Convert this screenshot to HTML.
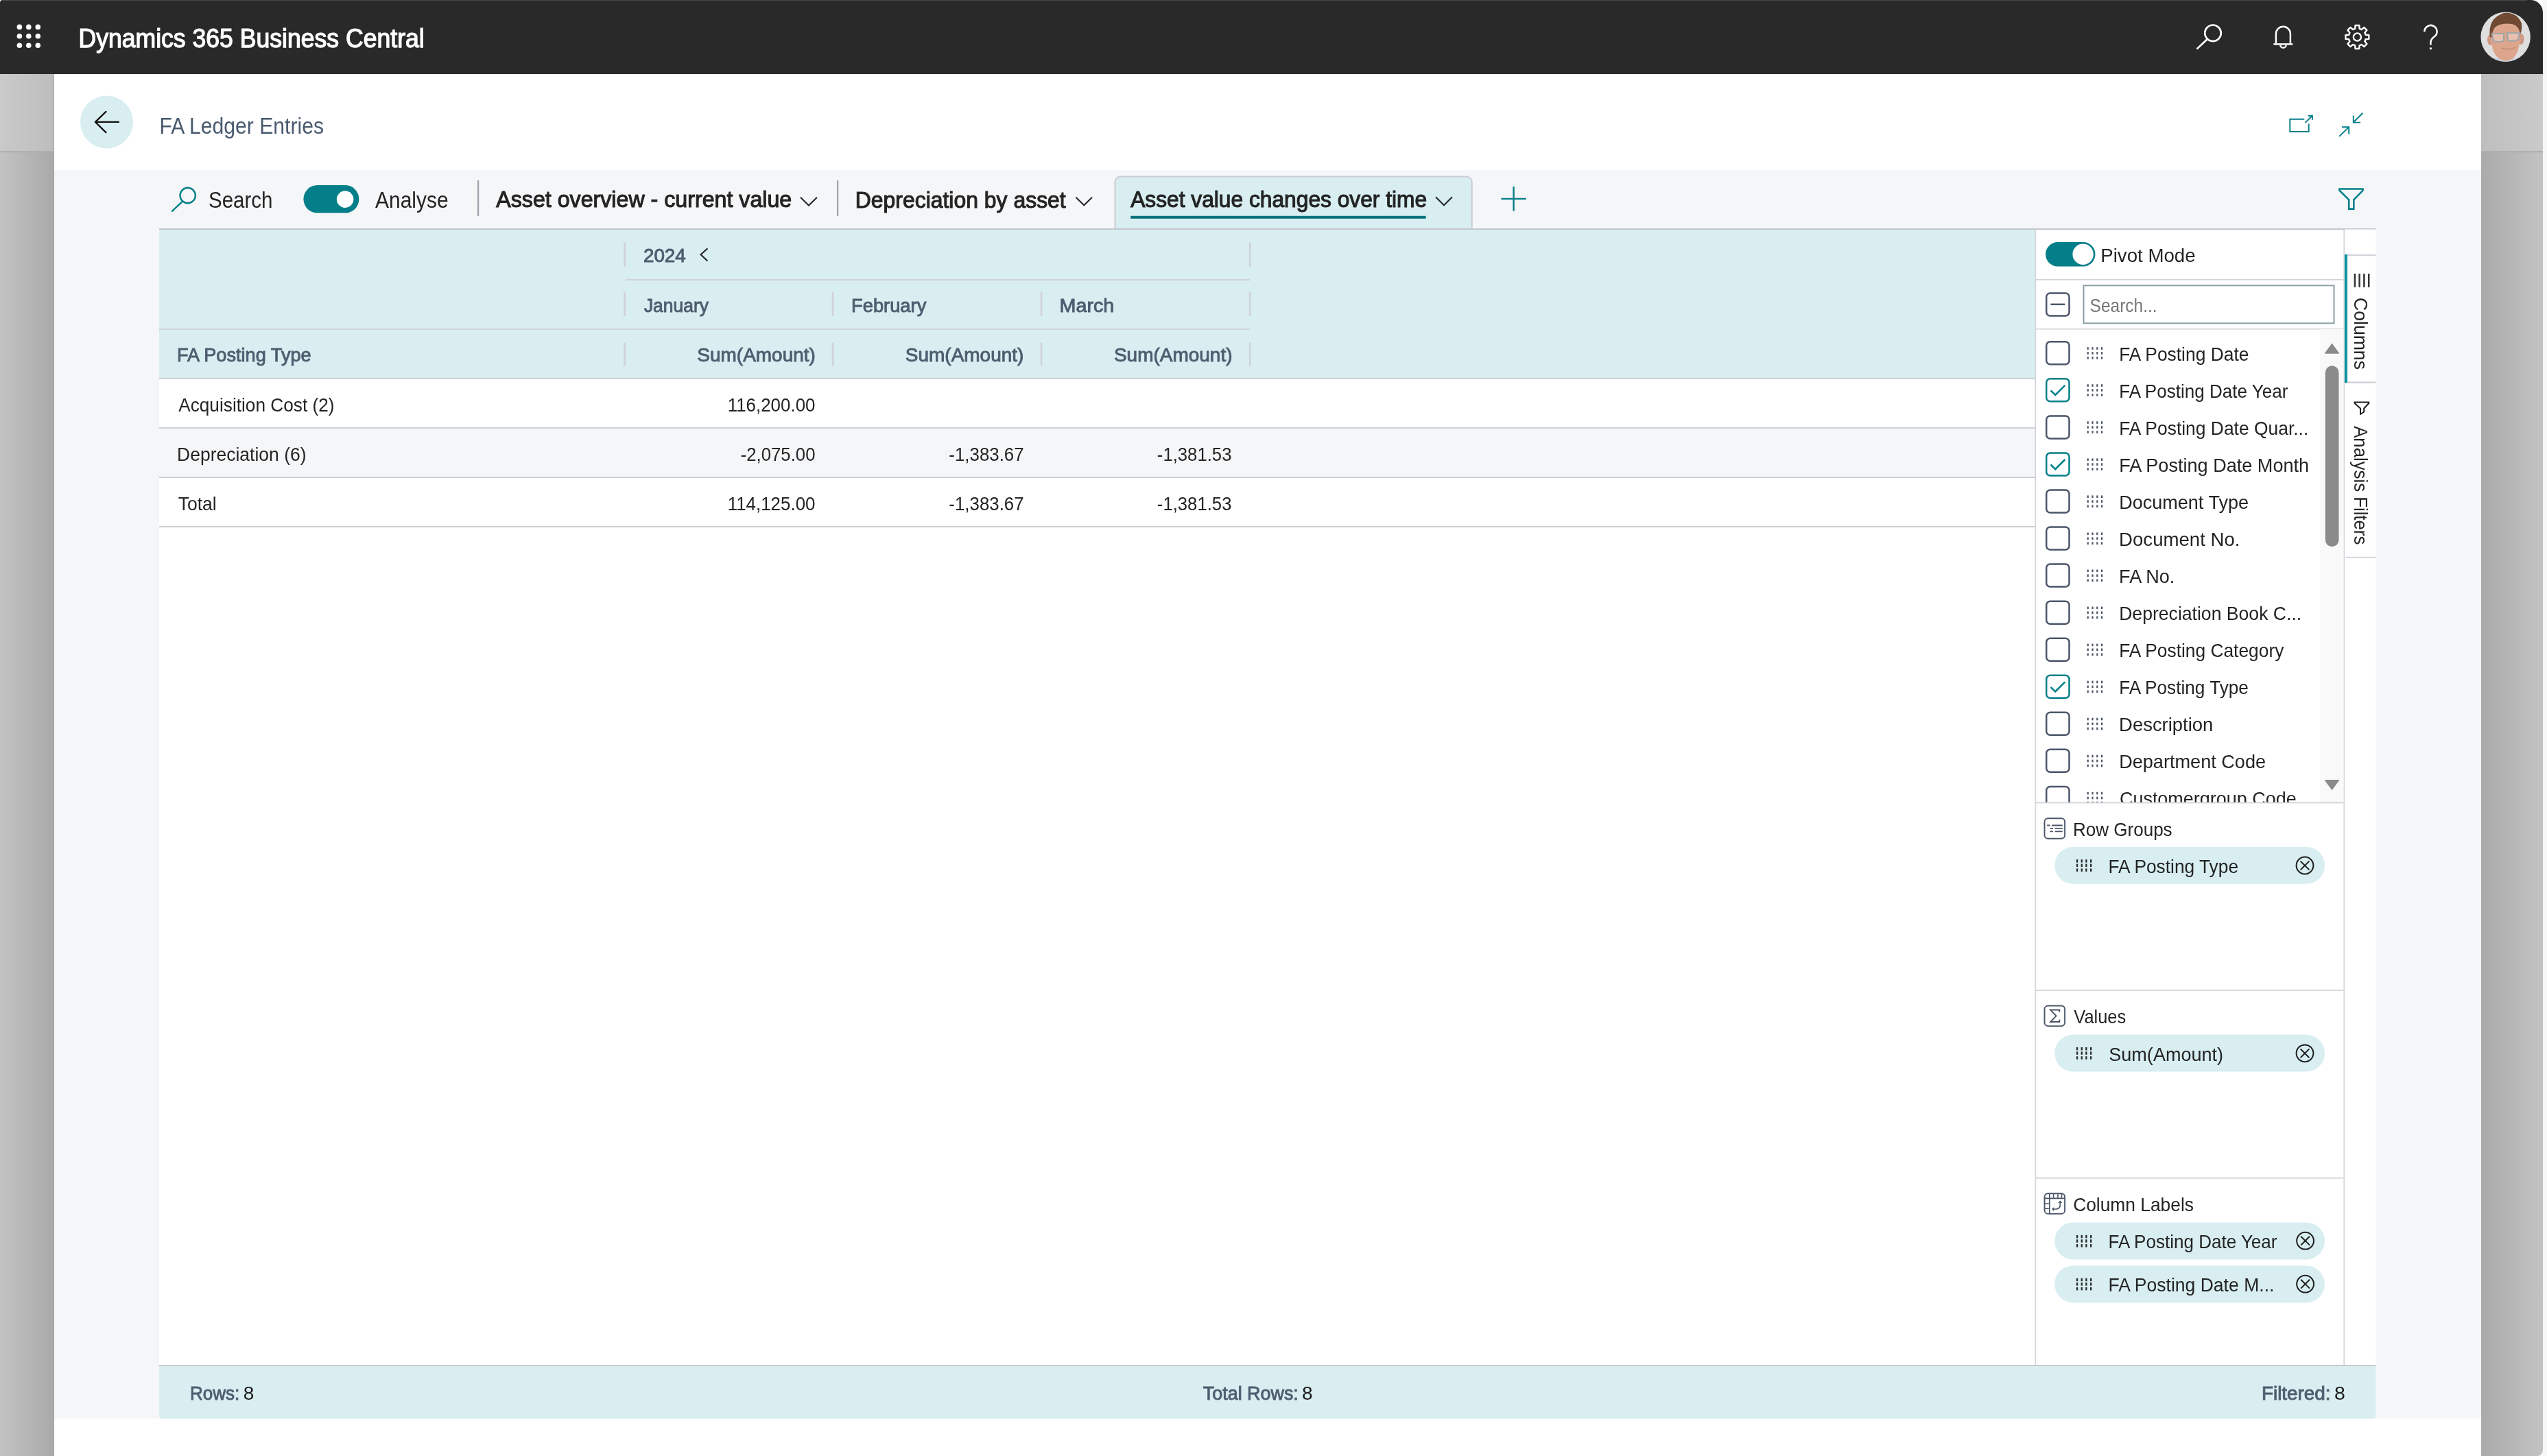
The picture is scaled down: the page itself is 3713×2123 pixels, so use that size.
<!DOCTYPE html>
<html><head><meta charset="utf-8"><title>FA Ledger Entries</title>
<style>
html,body{margin:0;padding:0;width:3713px;height:2123px;overflow:hidden;background:#fff;}
svg{display:block;font-family:"Liberation Sans",sans-serif;will-change:transform;}
</style></head><body>
<svg width="3713" height="2123" viewBox="0 0 3713 2123">
<defs><linearGradient id="glt" x1="0" y1="0" x2="1" y2="0"><stop offset="0" stop-color="#cacaca"/><stop offset="1" stop-color="#bdbdbd"/></linearGradient><linearGradient id="glb" x1="0" y1="0" x2="1" y2="0"><stop offset="0" stop-color="#c3c3c3"/><stop offset="1" stop-color="#a9a9a9"/></linearGradient><linearGradient id="grt" x1="0" y1="0" x2="1" y2="0"><stop offset="0" stop-color="#bebebe"/><stop offset="1" stop-color="#cacaca"/></linearGradient><linearGradient id="grb" x1="0" y1="0" x2="1" y2="0"><stop offset="0" stop-color="#aaaaaa"/><stop offset="1" stop-color="#c3c3c3"/></linearGradient><clipPath id="av"><circle cx="3652.6" cy="53.8" r="36.2"/></clipPath><clipPath id="lst"><rect x="2968" y="480" width="449" height="690"/></clipPath></defs>
<rect x="0" y="0" width="3713" height="2123" fill="#ffffff" />
<rect x="3707" y="0" width="6" height="2123" fill="#f7f7f7" />
<rect x="0" y="108" width="79" height="113" fill="url(#glt)" />
<rect x="0" y="221" width="79" height="1902" fill="url(#glb)" />
<rect x="0" y="220.5" width="79" height="1.6" fill="#a7a7a7" />
<rect x="77.8" y="108" width="1.2" height="2015" fill="#a5a5a5" />
<rect x="3617" y="108" width="90" height="113" fill="url(#grt)" />
<path d="M3617,221 H3707 V2115 A8,8 0 0 1 3699,2123 H3617 Z" fill="url(#grb)"/>
<rect x="3617" y="220.5" width="90" height="1.6" fill="#a7a7a7" />
<path d="M4,0 H3689 A18,18 0 0 1 3707,18 V108 H0 V4 A4,4 0 0 1 4,0 Z" fill="#292929"/>
<rect x="4" y="0" width="3680" height="1" fill="#4a4a4a" />
<rect x="79" y="248" width="3538" height="1820.5" fill="#f5f6f8" />
<circle cx="28.4" cy="39.4" r="3.8" fill="#fff"/>
<circle cx="28.4" cy="52.7" r="3.8" fill="#fff"/>
<circle cx="28.4" cy="66.3" r="3.8" fill="#fff"/>
<circle cx="41.8" cy="39.4" r="3.8" fill="#fff"/>
<circle cx="41.8" cy="52.7" r="3.8" fill="#fff"/>
<circle cx="41.8" cy="66.3" r="3.8" fill="#fff"/>
<circle cx="55.3" cy="39.4" r="3.8" fill="#fff"/>
<circle cx="55.3" cy="52.7" r="3.8" fill="#fff"/>
<circle cx="55.3" cy="66.3" r="3.8" fill="#fff"/>
<text x="114.45" y="69.20" font-size="37.94" font-weight="normal" fill="#ffffff" textLength="504.27" lengthAdjust="spacingAndGlyphs"  stroke="#ffffff" stroke-width="1.25">Dynamics 365 Business Central</text>
<circle cx="3226" cy="48.3" r="11.8" fill="none" stroke="#fff" stroke-width="2.6"/>
<line x1="3217.6" y1="57.3" x2="3203.3" y2="70.8" stroke="#fff" stroke-width="2.6" stroke-linecap="round"/>
<path d="M3317.9,63.5 V49.3 A10.5,10.5 0 0 1 3338.9,49.3 V63.5" fill="none" stroke="#fff" stroke-width="2.5"/>
<line x1="3314.4" y1="64.4" x2="3342.3" y2="64.4" stroke="#fff" stroke-width="2.5"/>
<path d="M3324.2,65.5 A4.2,4.2 0 0 0 3332.6,65.5" fill="none" stroke="#fff" stroke-width="2.3"/>
<path d="M3432.19,42.12 L3433.16,41.82 L3433.49,37.05 L3439.31,37.05 L3439.64,41.82 L3441.82,42.63 L3442.72,43.10 L3446.33,39.96 L3450.44,44.07 L3447.30,47.68 L3448.28,49.79 L3448.58,50.76 L3453.35,51.09 L3453.35,56.91 L3448.58,57.24 L3447.77,59.42 L3447.30,60.32 L3450.44,63.93 L3446.33,68.04 L3442.72,64.90 L3440.61,65.88 L3439.64,66.18 L3439.31,70.95 L3433.49,70.95 L3433.16,66.18 L3430.98,65.37 L3430.08,64.90 L3426.47,68.04 L3422.36,63.93 L3425.50,60.32 L3424.52,58.21 L3424.22,57.24 L3419.45,56.91 L3419.45,51.09 L3424.22,50.76 L3425.03,48.58 L3425.50,47.68 L3422.36,44.07 L3426.47,39.96 L3430.08,43.10 Z" fill="none" stroke="#fff" stroke-width="2.4" stroke-linejoin="round"/>
<circle cx="3436.4" cy="54.0" r="5.6" fill="none" stroke="#fff" stroke-width="2.4"/>
<path d="M3534.4,46.3 A9.1,9.1 0 1 1 3548.3,53.8 C3545,56.3 3543.4,58.6 3543.4,62.3 V65.6" fill="none" stroke="#fff" stroke-width="2.5"/>
<rect x="3541.9" y="69.4" width="3.0" height="2.7" fill="#fff" />
<g clip-path="url(#av)"><rect x="3610" y="10" width="90" height="90" fill="#dedede"/><path d="M3628,92 Q3640,80 3652,84 Q3668,82 3680,92 Z" fill="#c5d2e0"/><ellipse cx="3630.5" cy="58" rx="4.5" ry="8" fill="#cf9a83"/><ellipse cx="3675" cy="57" rx="4.5" ry="8" fill="#cf9a83"/><path d="M3631,48 Q3630,30 3652,28 Q3674,28 3674,48 Q3674,78 3662,86 Q3653,91 3644,86 Q3631,78 3631,48 Z" fill="#dca58c"/><path d="M3630,54 Q3626,27 3650,19 Q3669,17 3676,34 Q3677,44 3674,50 Q3672,37 3662,35 Q3646,33 3637,40 Q3633,46 3632,55 Z" fill="#704a33"/><path d="M3633,49 H3650 V60 Q3642,62 3635,60 Z M3655,48 H3673 L3671,58 Q3663,61 3656,59 Z" fill="#e8c1ae" stroke="#a2a6a8" stroke-width="2.2"/><path d="M3647,70 Q3657,76 3667,69 Q3658,73 3647,70 Z" fill="#f4e6c4" stroke="#b77d68" stroke-width="0.8"/></g>
<circle cx="155.5" cy="178" r="38.5" fill="#d8eef1"/>
<path d="M154.4,162.9 L138.9,177.9 L154.4,193.1 M138.9,177.9 H173" fill="none" stroke="#141210" stroke-width="2.3" stroke-linecap="round" stroke-linejoin="round"/>
<text x="232.39" y="194.90" font-size="33.28" font-weight="normal" fill="#4a5a6f" textLength="239.65" lengthAdjust="spacingAndGlyphs" >FA Ledger Entries</text>
<path d="M3359.3,173.8 H3338.3 V191.9 H3365.7 V180.5" fill="none" stroke="#047f89" stroke-width="1.95"/>
<path d="M3360.4,179.1 L3370.5,169 M3364.5,168.7 H3370.9 V174.7" fill="none" stroke="#047f89" stroke-width="1.95"/>
<path d="M3444.5,164.8 L3431,178.2 M3430.8,168.4 V178.6 H3441" fill="none" stroke="#047f89" stroke-width="1.95"/>
<path d="M3410.2,198.9 L3423.8,185.6 M3414,185.2 H3424.2 V195.4" fill="none" stroke="#047f89" stroke-width="1.95"/>
<circle cx="273.7" cy="285" r="11.2" fill="none" stroke="#047f89" stroke-width="2.4"/>
<line x1="265.3" y1="294.3" x2="251" y2="307.8" stroke="#047f89" stroke-width="2.4" stroke-linecap="round"/>
<text x="303.97" y="302.70" font-size="33.14" font-weight="normal" fill="#242424" textLength="93.55" lengthAdjust="spacingAndGlyphs" >Search</text>
<rect x="442.4" y="270" width="81" height="40.6" rx="20.3" fill="#047f89"/>
<circle cx="503.1" cy="290.6" r="12.3" fill="#fff"/>
<text x="547.00" y="302.70" font-size="33.14" font-weight="normal" fill="#242424" textLength="106.73" lengthAdjust="spacingAndGlyphs" >Analyse</text>
<rect x="696" y="263" width="2.2" height="52" fill="#9aa2ac" />
<rect x="1220" y="263" width="2.2" height="52" fill="#9aa2ac" />
<text x="723.30" y="302.10" font-size="32.99" font-weight="normal" fill="#242424" textLength="430.93" lengthAdjust="spacingAndGlyphs"  stroke="#242424" stroke-width="1.09">Asset overview - current value</text>
<polyline points="1167,287.8 1179,299.5 1191,287.8" fill="none" stroke="#242424" stroke-width="2"/>
<text x="1246.75" y="302.70" font-size="32.99" font-weight="normal" fill="#242424" textLength="306.96" lengthAdjust="spacingAndGlyphs"  stroke="#242424" stroke-width="1.09">Depreciation by asset</text>
<polyline points="1568.5,287.8 1580.3,299.3 1592,287.8" fill="none" stroke="#242424" stroke-width="2"/>
<path d="M1625.5,334 V265.5 A8,8 0 0 1 1633.5,257.5 H2137.7 A8,8 0 0 1 2145.7,265.5 V334" fill="#d8eef1" stroke="#c9ccd1" stroke-width="2"/>
<text x="1648.20" y="302.00" font-size="32.99" font-weight="normal" fill="#242424" textLength="431.94" lengthAdjust="spacingAndGlyphs"  stroke="#242424" stroke-width="1.09">Asset value changes over time</text>
<rect x="1648.2" y="314.8" width="430.4" height="4" fill="#05727c" />
<polyline points="2093,287.3 2105,299.3 2117,287.3" fill="none" stroke="#242424" stroke-width="2"/>
<path d="M2188.4,289.9 H2224.8 M2206.6,271.9 V307.8" fill="none" stroke="#047f89" stroke-width="2.4"/>
<path d="M3410.5,275.5 H3444.5 V277.8 L3431.3,291.3 V304.6 H3424.2 V291.3 L3410.5,277.8 Z" fill="none" stroke="#047f89" stroke-width="2.6" stroke-linejoin="miter"/>
<rect x="232" y="334" width="3231.4" height="1656" fill="#ffffff" />
<rect x="232" y="333" width="3231.4" height="2" fill="#c3c6cc" />
<rect x="232" y="335" width="2735" height="216" fill="#d8eef1" />
<rect x="912" y="407" width="910" height="2" fill="#d1d3d8" />
<rect x="232" y="479" width="1590" height="2" fill="#d1d3d8" />
<rect x="232" y="551" width="2735" height="2" fill="#cdd0d5" />
<rect x="909.2" y="353.3" width="2.8" height="35.5" fill="#d1d3d8" />
<rect x="909.2" y="425.4" width="2.8" height="35.5" fill="#d1d3d8" />
<rect x="909.2" y="499.4" width="2.8" height="34.5" fill="#d1d3d8" />
<rect x="1212.7" y="425.4" width="2.8" height="35.5" fill="#d1d3d8" />
<rect x="1212.7" y="499.4" width="2.8" height="34.5" fill="#d1d3d8" />
<rect x="1516.7" y="425.4" width="2.8" height="35.5" fill="#d1d3d8" />
<rect x="1516.7" y="499.4" width="2.8" height="34.5" fill="#d1d3d8" />
<rect x="1820.8" y="353.3" width="2.8" height="35.5" fill="#d1d3d8" />
<rect x="1820.8" y="425.4" width="2.8" height="35.5" fill="#d1d3d8" />
<rect x="1820.8" y="499.4" width="2.8" height="34.5" fill="#d1d3d8" />
<text x="937.91" y="382.30" font-size="28.05" font-weight="normal" fill="#4f5d70" textLength="61.92" lengthAdjust="spacingAndGlyphs"  stroke="#4f5d70" stroke-width="0.93">2024</text>
<polyline points="1031.4,362.2 1021.6,371.3 1031.4,380.4" fill="none" stroke="#242424" stroke-width="2.1"/>
<text x="938.90" y="455.10" font-size="28.20" font-weight="normal" fill="#4f5d70" textLength="94.04" lengthAdjust="spacingAndGlyphs"  stroke="#4f5d70" stroke-width="0.93">January</text>
<text x="1241.01" y="455.10" font-size="28.20" font-weight="normal" fill="#4f5d70" textLength="109.33" lengthAdjust="spacingAndGlyphs"  stroke="#4f5d70" stroke-width="0.93">February</text>
<text x="1544.50" y="455.10" font-size="28.20" font-weight="normal" fill="#4f5d70" textLength="79.87" lengthAdjust="spacingAndGlyphs"  stroke="#4f5d70" stroke-width="0.93">March</text>
<text x="258.03" y="527.10" font-size="27.91" font-weight="normal" fill="#4f5d70" textLength="195.66" lengthAdjust="spacingAndGlyphs"  stroke="#4f5d70" stroke-width="0.92">FA Posting Type</text>
<text x="1016.34" y="527.40" font-size="28.20" font-weight="normal" fill="#4f5d70" textLength="172.54" lengthAdjust="spacingAndGlyphs"  stroke="#4f5d70" stroke-width="0.93">Sum(Amount)</text>
<text x="1319.84" y="527.40" font-size="28.20" font-weight="normal" fill="#4f5d70" textLength="172.54" lengthAdjust="spacingAndGlyphs"  stroke="#4f5d70" stroke-width="0.93">Sum(Amount)</text>
<text x="1623.94" y="527.40" font-size="28.20" font-weight="normal" fill="#4f5d70" textLength="172.54" lengthAdjust="spacingAndGlyphs"  stroke="#4f5d70" stroke-width="0.93">Sum(Amount)</text>
<rect x="232" y="625" width="2735" height="70" fill="#f5f6f8" />
<rect x="232" y="623" width="2735" height="2" fill="#cdd0d5" />
<rect x="232" y="695" width="2735" height="2" fill="#cdd0d5" />
<rect x="232" y="767" width="2735" height="2" fill="#cdd0d5" />
<text x="260.20" y="600.20" font-size="27.91" font-weight="normal" fill="#242424" textLength="227.31" lengthAdjust="spacingAndGlyphs" >Acquisition Cost (2)</text>
<text x="1060.65" y="600.00" font-size="27.91" font-weight="normal" fill="#242424" textLength="127.87" lengthAdjust="spacingAndGlyphs" >116,200.00</text>
<text x="258.08" y="672.00" font-size="27.91" font-weight="normal" fill="#242424" textLength="188.43" lengthAdjust="spacingAndGlyphs" >Depreciation (6)</text>
<text x="1079.64" y="672.00" font-size="27.91" font-weight="normal" fill="#242424" textLength="108.88" lengthAdjust="spacingAndGlyphs" >-2,075.00</text>
<text x="1383.34" y="672.00" font-size="27.91" font-weight="normal" fill="#242424" textLength="109.27" lengthAdjust="spacingAndGlyphs" >-1,383.67</text>
<text x="1686.84" y="672.00" font-size="27.91" font-weight="normal" fill="#242424" textLength="108.60" lengthAdjust="spacingAndGlyphs" >-1,381.53</text>
<text x="259.67" y="743.60" font-size="27.91" font-weight="normal" fill="#242424" textLength="56.12" lengthAdjust="spacingAndGlyphs" >Total</text>
<text x="1060.65" y="743.70" font-size="27.91" font-weight="normal" fill="#242424" textLength="127.87" lengthAdjust="spacingAndGlyphs" >114,125.00</text>
<text x="1383.34" y="743.70" font-size="27.91" font-weight="normal" fill="#242424" textLength="109.27" lengthAdjust="spacingAndGlyphs" >-1,383.67</text>
<text x="1686.84" y="743.70" font-size="27.91" font-weight="normal" fill="#242424" textLength="108.60" lengthAdjust="spacingAndGlyphs" >-1,381.53</text>
<rect x="2966.6" y="334.5" width="1.6" height="1655.5" fill="#d0d4d9" />
<rect x="3416.4" y="334.5" width="1.6" height="1655.5" fill="#d0d4d9" />
<rect x="2982" y="352.9" width="72.5" height="35.7" rx="17.85" fill="#047f89"/>
<circle cx="3036.6" cy="370.75" r="16.2" fill="#fff" stroke="#047f89" stroke-width="2"/>
<text x="3062.29" y="382.40" font-size="28.20" font-weight="normal" fill="#242424" textLength="138.33" lengthAdjust="spacingAndGlyphs" >Pivot Mode</text>
<rect x="2968" y="407" width="448.4" height="1.6" fill="#d0d4d9" />
<rect x="2983.2" y="427.4" width="33.3" height="33" rx="5.5" fill="none" stroke="#4b5668" stroke-width="2.5"/>
<line x1="2989.4" y1="443.8" x2="3010.3" y2="443.8" stroke="#4b5668" stroke-width="2.5"/>
<rect x="3037.5" y="416.3" width="365" height="55" fill="#fff" stroke="#8aa0a2" stroke-width="2"/>
<text x="3046.60" y="454.80" font-size="27.33" font-weight="normal" fill="#767676" textLength="97.95" lengthAdjust="spacingAndGlyphs" >Search...</text>
<rect x="2968" y="479" width="448.4" height="1.6" fill="#d0d4d9" />
<g clip-path="url(#lst)">
<rect x="3382" y="480" width="34.4" height="690" fill="#f9f9f9" />
<rect x="2983.2" y="498.30" width="33.3" height="33" rx="5.5" fill="none" stroke="#4b5668" stroke-width="2.5"/>
<rect x="3042.6" y="506.20" width="2.2" height="3.6" fill="#4b5668" />
<rect x="3042.6" y="513.10" width="2.2" height="3.6" fill="#4b5668" />
<rect x="3042.6" y="520.10" width="2.2" height="3.6" fill="#4b5668" />
<rect x="3049.4" y="506.20" width="2.2" height="3.6" fill="#4b5668" />
<rect x="3049.4" y="513.10" width="2.2" height="3.6" fill="#4b5668" />
<rect x="3049.4" y="520.10" width="2.2" height="3.6" fill="#4b5668" />
<rect x="3056.2" y="506.20" width="2.2" height="3.6" fill="#4b5668" />
<rect x="3056.2" y="513.10" width="2.2" height="3.6" fill="#4b5668" />
<rect x="3056.2" y="520.10" width="2.2" height="3.6" fill="#4b5668" />
<rect x="3063.0" y="506.20" width="2.2" height="3.6" fill="#4b5668" />
<rect x="3063.0" y="513.10" width="2.2" height="3.6" fill="#4b5668" />
<rect x="3063.0" y="520.10" width="2.2" height="3.6" fill="#4b5668" />
<text x="3089.19" y="525.60" font-size="27.03" font-weight="normal" fill="#242424" textLength="189.23" lengthAdjust="spacingAndGlyphs" >FA Posting Date</text>
<rect x="2983.2" y="552.35" width="33.3" height="33" rx="5.5" fill="none" stroke="#047f89" stroke-width="2.5"/>
<polyline points="2989.6,569.40 2996.2,576.00 3010.3,561.90" fill="none" stroke="#047f89" stroke-width="2.6" stroke-linejoin="miter"/>
<rect x="3042.6" y="560.25" width="2.2" height="3.6" fill="#4b5668" />
<rect x="3042.6" y="567.15" width="2.2" height="3.6" fill="#4b5668" />
<rect x="3042.6" y="574.15" width="2.2" height="3.6" fill="#4b5668" />
<rect x="3049.4" y="560.25" width="2.2" height="3.6" fill="#4b5668" />
<rect x="3049.4" y="567.15" width="2.2" height="3.6" fill="#4b5668" />
<rect x="3049.4" y="574.15" width="2.2" height="3.6" fill="#4b5668" />
<rect x="3056.2" y="560.25" width="2.2" height="3.6" fill="#4b5668" />
<rect x="3056.2" y="567.15" width="2.2" height="3.6" fill="#4b5668" />
<rect x="3056.2" y="574.15" width="2.2" height="3.6" fill="#4b5668" />
<rect x="3063.0" y="560.25" width="2.2" height="3.6" fill="#4b5668" />
<rect x="3063.0" y="567.15" width="2.2" height="3.6" fill="#4b5668" />
<rect x="3063.0" y="574.15" width="2.2" height="3.6" fill="#4b5668" />
<text x="3089.22" y="579.65" font-size="27.03" font-weight="normal" fill="#242424" textLength="246.11" lengthAdjust="spacingAndGlyphs" >FA Posting Date Year</text>
<rect x="2983.2" y="606.40" width="33.3" height="33" rx="5.5" fill="none" stroke="#4b5668" stroke-width="2.5"/>
<rect x="3042.6" y="614.30" width="2.2" height="3.6" fill="#4b5668" />
<rect x="3042.6" y="621.20" width="2.2" height="3.6" fill="#4b5668" />
<rect x="3042.6" y="628.20" width="2.2" height="3.6" fill="#4b5668" />
<rect x="3049.4" y="614.30" width="2.2" height="3.6" fill="#4b5668" />
<rect x="3049.4" y="621.20" width="2.2" height="3.6" fill="#4b5668" />
<rect x="3049.4" y="628.20" width="2.2" height="3.6" fill="#4b5668" />
<rect x="3056.2" y="614.30" width="2.2" height="3.6" fill="#4b5668" />
<rect x="3056.2" y="621.20" width="2.2" height="3.6" fill="#4b5668" />
<rect x="3056.2" y="628.20" width="2.2" height="3.6" fill="#4b5668" />
<rect x="3063.0" y="614.30" width="2.2" height="3.6" fill="#4b5668" />
<rect x="3063.0" y="621.20" width="2.2" height="3.6" fill="#4b5668" />
<rect x="3063.0" y="628.20" width="2.2" height="3.6" fill="#4b5668" />
<text x="3089.19" y="633.70" font-size="27.03" font-weight="normal" fill="#242424" textLength="276.10" lengthAdjust="spacingAndGlyphs" >FA Posting Date Quar...</text>
<rect x="2983.2" y="660.45" width="33.3" height="33" rx="5.5" fill="none" stroke="#047f89" stroke-width="2.5"/>
<polyline points="2989.6,677.50 2996.2,684.10 3010.3,670.00" fill="none" stroke="#047f89" stroke-width="2.6" stroke-linejoin="miter"/>
<rect x="3042.6" y="668.35" width="2.2" height="3.6" fill="#4b5668" />
<rect x="3042.6" y="675.25" width="2.2" height="3.6" fill="#4b5668" />
<rect x="3042.6" y="682.25" width="2.2" height="3.6" fill="#4b5668" />
<rect x="3049.4" y="668.35" width="2.2" height="3.6" fill="#4b5668" />
<rect x="3049.4" y="675.25" width="2.2" height="3.6" fill="#4b5668" />
<rect x="3049.4" y="682.25" width="2.2" height="3.6" fill="#4b5668" />
<rect x="3056.2" y="668.35" width="2.2" height="3.6" fill="#4b5668" />
<rect x="3056.2" y="675.25" width="2.2" height="3.6" fill="#4b5668" />
<rect x="3056.2" y="682.25" width="2.2" height="3.6" fill="#4b5668" />
<rect x="3063.0" y="668.35" width="2.2" height="3.6" fill="#4b5668" />
<rect x="3063.0" y="675.25" width="2.2" height="3.6" fill="#4b5668" />
<rect x="3063.0" y="682.25" width="2.2" height="3.6" fill="#4b5668" />
<text x="3089.13" y="687.75" font-size="27.03" font-weight="normal" fill="#242424" textLength="277.02" lengthAdjust="spacingAndGlyphs" >FA Posting Date Month</text>
<rect x="2983.2" y="714.50" width="33.3" height="33" rx="5.5" fill="none" stroke="#4b5668" stroke-width="2.5"/>
<rect x="3042.6" y="722.40" width="2.2" height="3.6" fill="#4b5668" />
<rect x="3042.6" y="729.30" width="2.2" height="3.6" fill="#4b5668" />
<rect x="3042.6" y="736.30" width="2.2" height="3.6" fill="#4b5668" />
<rect x="3049.4" y="722.40" width="2.2" height="3.6" fill="#4b5668" />
<rect x="3049.4" y="729.30" width="2.2" height="3.6" fill="#4b5668" />
<rect x="3049.4" y="736.30" width="2.2" height="3.6" fill="#4b5668" />
<rect x="3056.2" y="722.40" width="2.2" height="3.6" fill="#4b5668" />
<rect x="3056.2" y="729.30" width="2.2" height="3.6" fill="#4b5668" />
<rect x="3056.2" y="736.30" width="2.2" height="3.6" fill="#4b5668" />
<rect x="3063.0" y="722.40" width="2.2" height="3.6" fill="#4b5668" />
<rect x="3063.0" y="729.30" width="2.2" height="3.6" fill="#4b5668" />
<rect x="3063.0" y="736.30" width="2.2" height="3.6" fill="#4b5668" />
<text x="3089.14" y="741.80" font-size="27.03" font-weight="normal" fill="#242424" textLength="188.89" lengthAdjust="spacingAndGlyphs" >Document Type</text>
<rect x="2983.2" y="768.55" width="33.3" height="33" rx="5.5" fill="none" stroke="#4b5668" stroke-width="2.5"/>
<rect x="3042.6" y="776.45" width="2.2" height="3.6" fill="#4b5668" />
<rect x="3042.6" y="783.35" width="2.2" height="3.6" fill="#4b5668" />
<rect x="3042.6" y="790.35" width="2.2" height="3.6" fill="#4b5668" />
<rect x="3049.4" y="776.45" width="2.2" height="3.6" fill="#4b5668" />
<rect x="3049.4" y="783.35" width="2.2" height="3.6" fill="#4b5668" />
<rect x="3049.4" y="790.35" width="2.2" height="3.6" fill="#4b5668" />
<rect x="3056.2" y="776.45" width="2.2" height="3.6" fill="#4b5668" />
<rect x="3056.2" y="783.35" width="2.2" height="3.6" fill="#4b5668" />
<rect x="3056.2" y="790.35" width="2.2" height="3.6" fill="#4b5668" />
<rect x="3063.0" y="776.45" width="2.2" height="3.6" fill="#4b5668" />
<rect x="3063.0" y="783.35" width="2.2" height="3.6" fill="#4b5668" />
<rect x="3063.0" y="790.35" width="2.2" height="3.6" fill="#4b5668" />
<text x="3089.09" y="795.85" font-size="27.03" font-weight="normal" fill="#242424" textLength="176.44" lengthAdjust="spacingAndGlyphs" >Document No.</text>
<rect x="2983.2" y="822.60" width="33.3" height="33" rx="5.5" fill="none" stroke="#4b5668" stroke-width="2.5"/>
<rect x="3042.6" y="830.50" width="2.2" height="3.6" fill="#4b5668" />
<rect x="3042.6" y="837.40" width="2.2" height="3.6" fill="#4b5668" />
<rect x="3042.6" y="844.40" width="2.2" height="3.6" fill="#4b5668" />
<rect x="3049.4" y="830.50" width="2.2" height="3.6" fill="#4b5668" />
<rect x="3049.4" y="837.40" width="2.2" height="3.6" fill="#4b5668" />
<rect x="3049.4" y="844.40" width="2.2" height="3.6" fill="#4b5668" />
<rect x="3056.2" y="830.50" width="2.2" height="3.6" fill="#4b5668" />
<rect x="3056.2" y="837.40" width="2.2" height="3.6" fill="#4b5668" />
<rect x="3056.2" y="844.40" width="2.2" height="3.6" fill="#4b5668" />
<rect x="3063.0" y="830.50" width="2.2" height="3.6" fill="#4b5668" />
<rect x="3063.0" y="837.40" width="2.2" height="3.6" fill="#4b5668" />
<rect x="3063.0" y="844.40" width="2.2" height="3.6" fill="#4b5668" />
<text x="3089.13" y="849.90" font-size="27.03" font-weight="normal" fill="#242424" textLength="81.24" lengthAdjust="spacingAndGlyphs" >FA No.</text>
<rect x="2983.2" y="876.65" width="33.3" height="33" rx="5.5" fill="none" stroke="#4b5668" stroke-width="2.5"/>
<rect x="3042.6" y="884.55" width="2.2" height="3.6" fill="#4b5668" />
<rect x="3042.6" y="891.45" width="2.2" height="3.6" fill="#4b5668" />
<rect x="3042.6" y="898.45" width="2.2" height="3.6" fill="#4b5668" />
<rect x="3049.4" y="884.55" width="2.2" height="3.6" fill="#4b5668" />
<rect x="3049.4" y="891.45" width="2.2" height="3.6" fill="#4b5668" />
<rect x="3049.4" y="898.45" width="2.2" height="3.6" fill="#4b5668" />
<rect x="3056.2" y="884.55" width="2.2" height="3.6" fill="#4b5668" />
<rect x="3056.2" y="891.45" width="2.2" height="3.6" fill="#4b5668" />
<rect x="3056.2" y="898.45" width="2.2" height="3.6" fill="#4b5668" />
<rect x="3063.0" y="884.55" width="2.2" height="3.6" fill="#4b5668" />
<rect x="3063.0" y="891.45" width="2.2" height="3.6" fill="#4b5668" />
<rect x="3063.0" y="898.45" width="2.2" height="3.6" fill="#4b5668" />
<text x="3089.17" y="903.95" font-size="27.03" font-weight="normal" fill="#242424" textLength="266.06" lengthAdjust="spacingAndGlyphs" >Depreciation Book C...</text>
<rect x="2983.2" y="930.70" width="33.3" height="33" rx="5.5" fill="none" stroke="#4b5668" stroke-width="2.5"/>
<rect x="3042.6" y="938.60" width="2.2" height="3.6" fill="#4b5668" />
<rect x="3042.6" y="945.50" width="2.2" height="3.6" fill="#4b5668" />
<rect x="3042.6" y="952.50" width="2.2" height="3.6" fill="#4b5668" />
<rect x="3049.4" y="938.60" width="2.2" height="3.6" fill="#4b5668" />
<rect x="3049.4" y="945.50" width="2.2" height="3.6" fill="#4b5668" />
<rect x="3049.4" y="952.50" width="2.2" height="3.6" fill="#4b5668" />
<rect x="3056.2" y="938.60" width="2.2" height="3.6" fill="#4b5668" />
<rect x="3056.2" y="945.50" width="2.2" height="3.6" fill="#4b5668" />
<rect x="3056.2" y="952.50" width="2.2" height="3.6" fill="#4b5668" />
<rect x="3063.0" y="938.60" width="2.2" height="3.6" fill="#4b5668" />
<rect x="3063.0" y="945.50" width="2.2" height="3.6" fill="#4b5668" />
<rect x="3063.0" y="952.50" width="2.2" height="3.6" fill="#4b5668" />
<text x="3089.19" y="958.00" font-size="27.03" font-weight="normal" fill="#242424" textLength="240.15" lengthAdjust="spacingAndGlyphs" >FA Posting Category</text>
<rect x="2983.2" y="984.75" width="33.3" height="33" rx="5.5" fill="none" stroke="#047f89" stroke-width="2.5"/>
<polyline points="2989.6,1001.80 2996.2,1008.40 3010.3,994.30" fill="none" stroke="#047f89" stroke-width="2.6" stroke-linejoin="miter"/>
<rect x="3042.6" y="992.65" width="2.2" height="3.6" fill="#4b5668" />
<rect x="3042.6" y="999.55" width="2.2" height="3.6" fill="#4b5668" />
<rect x="3042.6" y="1006.55" width="2.2" height="3.6" fill="#4b5668" />
<rect x="3049.4" y="992.65" width="2.2" height="3.6" fill="#4b5668" />
<rect x="3049.4" y="999.55" width="2.2" height="3.6" fill="#4b5668" />
<rect x="3049.4" y="1006.55" width="2.2" height="3.6" fill="#4b5668" />
<rect x="3056.2" y="992.65" width="2.2" height="3.6" fill="#4b5668" />
<rect x="3056.2" y="999.55" width="2.2" height="3.6" fill="#4b5668" />
<rect x="3056.2" y="1006.55" width="2.2" height="3.6" fill="#4b5668" />
<rect x="3063.0" y="992.65" width="2.2" height="3.6" fill="#4b5668" />
<rect x="3063.0" y="999.55" width="2.2" height="3.6" fill="#4b5668" />
<rect x="3063.0" y="1006.55" width="2.2" height="3.6" fill="#4b5668" />
<text x="3089.21" y="1012.05" font-size="27.03" font-weight="normal" fill="#242424" textLength="188.74" lengthAdjust="spacingAndGlyphs" >FA Posting Type</text>
<rect x="2983.2" y="1038.80" width="33.3" height="33" rx="5.5" fill="none" stroke="#4b5668" stroke-width="2.5"/>
<rect x="3042.6" y="1046.70" width="2.2" height="3.6" fill="#4b5668" />
<rect x="3042.6" y="1053.60" width="2.2" height="3.6" fill="#4b5668" />
<rect x="3042.6" y="1060.60" width="2.2" height="3.6" fill="#4b5668" />
<rect x="3049.4" y="1046.70" width="2.2" height="3.6" fill="#4b5668" />
<rect x="3049.4" y="1053.60" width="2.2" height="3.6" fill="#4b5668" />
<rect x="3049.4" y="1060.60" width="2.2" height="3.6" fill="#4b5668" />
<rect x="3056.2" y="1046.70" width="2.2" height="3.6" fill="#4b5668" />
<rect x="3056.2" y="1053.60" width="2.2" height="3.6" fill="#4b5668" />
<rect x="3056.2" y="1060.60" width="2.2" height="3.6" fill="#4b5668" />
<rect x="3063.0" y="1046.70" width="2.2" height="3.6" fill="#4b5668" />
<rect x="3063.0" y="1053.60" width="2.2" height="3.6" fill="#4b5668" />
<rect x="3063.0" y="1060.60" width="2.2" height="3.6" fill="#4b5668" />
<text x="3089.11" y="1066.10" font-size="27.03" font-weight="normal" fill="#242424" textLength="137.24" lengthAdjust="spacingAndGlyphs" >Description</text>
<rect x="2983.2" y="1092.85" width="33.3" height="33" rx="5.5" fill="none" stroke="#4b5668" stroke-width="2.5"/>
<rect x="3042.6" y="1100.75" width="2.2" height="3.6" fill="#4b5668" />
<rect x="3042.6" y="1107.65" width="2.2" height="3.6" fill="#4b5668" />
<rect x="3042.6" y="1114.65" width="2.2" height="3.6" fill="#4b5668" />
<rect x="3049.4" y="1100.75" width="2.2" height="3.6" fill="#4b5668" />
<rect x="3049.4" y="1107.65" width="2.2" height="3.6" fill="#4b5668" />
<rect x="3049.4" y="1114.65" width="2.2" height="3.6" fill="#4b5668" />
<rect x="3056.2" y="1100.75" width="2.2" height="3.6" fill="#4b5668" />
<rect x="3056.2" y="1107.65" width="2.2" height="3.6" fill="#4b5668" />
<rect x="3056.2" y="1114.65" width="2.2" height="3.6" fill="#4b5668" />
<rect x="3063.0" y="1100.75" width="2.2" height="3.6" fill="#4b5668" />
<rect x="3063.0" y="1107.65" width="2.2" height="3.6" fill="#4b5668" />
<rect x="3063.0" y="1114.65" width="2.2" height="3.6" fill="#4b5668" />
<text x="3089.13" y="1120.15" font-size="27.03" font-weight="normal" fill="#242424" textLength="213.98" lengthAdjust="spacingAndGlyphs" >Department Code</text>
<rect x="2983.2" y="1146.90" width="33.3" height="33" rx="5.5" fill="none" stroke="#4b5668" stroke-width="2.5"/>
<rect x="3042.6" y="1154.80" width="2.2" height="3.6" fill="#4b5668" />
<rect x="3042.6" y="1161.70" width="2.2" height="3.6" fill="#4b5668" />
<rect x="3042.6" y="1168.70" width="2.2" height="3.6" fill="#4b5668" />
<rect x="3049.4" y="1154.80" width="2.2" height="3.6" fill="#4b5668" />
<rect x="3049.4" y="1161.70" width="2.2" height="3.6" fill="#4b5668" />
<rect x="3049.4" y="1168.70" width="2.2" height="3.6" fill="#4b5668" />
<rect x="3056.2" y="1154.80" width="2.2" height="3.6" fill="#4b5668" />
<rect x="3056.2" y="1161.70" width="2.2" height="3.6" fill="#4b5668" />
<rect x="3056.2" y="1168.70" width="2.2" height="3.6" fill="#4b5668" />
<rect x="3063.0" y="1154.80" width="2.2" height="3.6" fill="#4b5668" />
<rect x="3063.0" y="1161.70" width="2.2" height="3.6" fill="#4b5668" />
<rect x="3063.0" y="1168.70" width="2.2" height="3.6" fill="#4b5668" />
<text x="3089.95" y="1174.20" font-size="27.03" font-weight="normal" fill="#242424" textLength="257.78" lengthAdjust="spacingAndGlyphs" >Customergroup Code</text>
<path d="M3399.5,500.5 L3409.8,514.5 Q3410.5,515.8 3409,515.8 H3390 Q3388.5,515.8 3389.2,514.5 Z" fill="#8a8a8a"/>
<rect x="3389.8" y="533.3" width="19.7" height="263.8" rx="9.85" fill="#8a8a8a"/>
<path d="M3399.5,1152.3 L3409.8,1138.3 Q3410.5,1137 3409,1137 H3390 Q3388.5,1137 3389.2,1138.3 Z" fill="#8a8a8a"/>
</g>
<rect x="2968" y="1169.6" width="448.4" height="1.8" fill="#d0d4d9" />
<rect x="2980.5" y="1193.2" width="29.6" height="29.6" rx="5" fill="none" stroke="#4b5668" stroke-width="1.9"/>
<path d="M2984.2,1203.5 H2988.5 M2991,1203.5 H3006.7 M2988.5,1207.9 H2993 M2995.6,1207.9 H3006.7 M2988.5,1212.4 H2993 M2995.6,1212.4 H3006.7" stroke="#4b5668" stroke-width="1.9"/>
<text x="3021.92" y="1218.60" font-size="27.03" font-weight="normal" fill="#242424" textLength="144.74" lengthAdjust="spacingAndGlyphs" >Row Groups</text>
<rect x="2995.2" y="1234.8" width="393.8" height="54" rx="27" fill="#d8eef1"/>
<rect x="3026.9" y="1253.20" width="2.3" height="4.4" fill="#2b2b2b" />
<rect x="3026.9" y="1259.60" width="2.3" height="4.4" fill="#2b2b2b" />
<rect x="3026.9" y="1266.40" width="2.3" height="4.4" fill="#2b2b2b" />
<rect x="3033.6" y="1253.20" width="2.3" height="4.4" fill="#2b2b2b" />
<rect x="3033.6" y="1259.60" width="2.3" height="4.4" fill="#2b2b2b" />
<rect x="3033.6" y="1266.40" width="2.3" height="4.4" fill="#2b2b2b" />
<rect x="3040.2" y="1253.20" width="2.3" height="4.4" fill="#2b2b2b" />
<rect x="3040.2" y="1259.60" width="2.3" height="4.4" fill="#2b2b2b" />
<rect x="3040.2" y="1266.40" width="2.3" height="4.4" fill="#2b2b2b" />
<rect x="3047.0" y="1253.20" width="2.3" height="4.4" fill="#2b2b2b" />
<rect x="3047.0" y="1259.60" width="2.3" height="4.4" fill="#2b2b2b" />
<rect x="3047.0" y="1266.40" width="2.3" height="4.4" fill="#2b2b2b" />
<text x="3073.40" y="1272.70" font-size="27.47" font-weight="normal" fill="#242424" textLength="189.66" lengthAdjust="spacingAndGlyphs" >FA Posting Type</text>
<circle cx="3360" cy="1262" r="12.4" fill="none" stroke="#1f1f1f" stroke-width="2"/>
<path d="M3353.6,1255.6 L3366.4,1268.4 M3366.4,1255.6 L3353.6,1268.4" stroke="#1f1f1f" stroke-width="2"/>
<rect x="2968" y="1443" width="448.4" height="1.8" fill="#d0d4d9" />
<rect x="2980.5" y="1466.5" width="29.6" height="29.6" rx="5" fill="none" stroke="#4b5668" stroke-width="1.9"/>
<path d="M3002.3,1475.8 V1472.5 H2989 L2997.5,1481.3 L2989,1490 H3002.3 V1486.8" fill="none" stroke="#4b5668" stroke-width="1.9"/>
<text x="3023.37" y="1491.60" font-size="27.03" font-weight="normal" fill="#242424" textLength="75.78" lengthAdjust="spacingAndGlyphs" >Values</text>
<rect x="2995.2" y="1508.6" width="393.8" height="54" rx="27" fill="#d8eef1"/>
<rect x="3026.9" y="1527.00" width="2.3" height="4.4" fill="#2b2b2b" />
<rect x="3026.9" y="1533.40" width="2.3" height="4.4" fill="#2b2b2b" />
<rect x="3026.9" y="1540.20" width="2.3" height="4.4" fill="#2b2b2b" />
<rect x="3033.6" y="1527.00" width="2.3" height="4.4" fill="#2b2b2b" />
<rect x="3033.6" y="1533.40" width="2.3" height="4.4" fill="#2b2b2b" />
<rect x="3033.6" y="1540.20" width="2.3" height="4.4" fill="#2b2b2b" />
<rect x="3040.2" y="1527.00" width="2.3" height="4.4" fill="#2b2b2b" />
<rect x="3040.2" y="1533.40" width="2.3" height="4.4" fill="#2b2b2b" />
<rect x="3040.2" y="1540.20" width="2.3" height="4.4" fill="#2b2b2b" />
<rect x="3047.0" y="1527.00" width="2.3" height="4.4" fill="#2b2b2b" />
<rect x="3047.0" y="1533.40" width="2.3" height="4.4" fill="#2b2b2b" />
<rect x="3047.0" y="1540.20" width="2.3" height="4.4" fill="#2b2b2b" />
<text x="3074.28" y="1547.20" font-size="27.47" font-weight="normal" fill="#242424" textLength="166.84" lengthAdjust="spacingAndGlyphs" >Sum(Amount)</text>
<circle cx="3360" cy="1535.8" r="12.4" fill="none" stroke="#1f1f1f" stroke-width="2"/>
<path d="M3353.6,1529.3999999999999 L3366.4,1542.2 M3366.4,1529.3999999999999 L3353.6,1542.2" stroke="#1f1f1f" stroke-width="2"/>
<rect x="2968" y="1716.8" width="448.4" height="1.8" fill="#d0d4d9" />
<rect x="2980.5" y="1740.3" width="29.6" height="29.6" rx="5" fill="none" stroke="#4b5668" stroke-width="1.9"/>
<path d="M2987.8,1740.3 V1770 M2987.8,1747.4 H3010 M2980.5,1747.4 H2987.8 M2981,1755 H2987.8 M2981,1762.3 H2987.8 M2993.6,1741 V1747.4 M3000,1741 V1747.4 M3005.5,1741 V1747.4" fill="none" stroke="#4b5668" stroke-width="1.6"/>
<path d="M3003.3,1753.5 V1756.5 Q3003.3,1763 2996.5,1763 H2992.2" fill="none" stroke="#4b5668" stroke-width="1.7"/>
<path d="M3003.3,1750.5 L3006.3,1754 L3000.3,1754 Z M2991,1763 L2994.2,1760 L2994.2,1766 Z" fill="#4b5668"/>
<text x="3022.18" y="1766.00" font-size="27.03" font-weight="normal" fill="#242424" textLength="175.76" lengthAdjust="spacingAndGlyphs" >Column Labels</text>
<rect x="2995.2" y="1782.5" width="393.8" height="54" rx="27" fill="#d8eef1"/>
<rect x="3026.9" y="1800.90" width="2.3" height="4.4" fill="#2b2b2b" />
<rect x="3026.9" y="1807.30" width="2.3" height="4.4" fill="#2b2b2b" />
<rect x="3026.9" y="1814.10" width="2.3" height="4.4" fill="#2b2b2b" />
<rect x="3033.6" y="1800.90" width="2.3" height="4.4" fill="#2b2b2b" />
<rect x="3033.6" y="1807.30" width="2.3" height="4.4" fill="#2b2b2b" />
<rect x="3033.6" y="1814.10" width="2.3" height="4.4" fill="#2b2b2b" />
<rect x="3040.2" y="1800.90" width="2.3" height="4.4" fill="#2b2b2b" />
<rect x="3040.2" y="1807.30" width="2.3" height="4.4" fill="#2b2b2b" />
<rect x="3040.2" y="1814.10" width="2.3" height="4.4" fill="#2b2b2b" />
<rect x="3047.0" y="1800.90" width="2.3" height="4.4" fill="#2b2b2b" />
<rect x="3047.0" y="1807.30" width="2.3" height="4.4" fill="#2b2b2b" />
<rect x="3047.0" y="1814.10" width="2.3" height="4.4" fill="#2b2b2b" />
<text x="3073.42" y="1819.80" font-size="27.47" font-weight="normal" fill="#242424" textLength="246.11" lengthAdjust="spacingAndGlyphs" >FA Posting Date Year</text>
<circle cx="3360.6" cy="1809.2" r="12.4" fill="none" stroke="#1f1f1f" stroke-width="2"/>
<path d="M3354.2,1802.8 L3367.0,1815.6000000000001 M3367.0,1802.8 L3354.2,1815.6000000000001" stroke="#1f1f1f" stroke-width="2"/>
<rect x="2995.2" y="1845.4" width="393.8" height="54" rx="27" fill="#d8eef1"/>
<rect x="3026.9" y="1863.80" width="2.3" height="4.4" fill="#2b2b2b" />
<rect x="3026.9" y="1870.20" width="2.3" height="4.4" fill="#2b2b2b" />
<rect x="3026.9" y="1877.00" width="2.3" height="4.4" fill="#2b2b2b" />
<rect x="3033.6" y="1863.80" width="2.3" height="4.4" fill="#2b2b2b" />
<rect x="3033.6" y="1870.20" width="2.3" height="4.4" fill="#2b2b2b" />
<rect x="3033.6" y="1877.00" width="2.3" height="4.4" fill="#2b2b2b" />
<rect x="3040.2" y="1863.80" width="2.3" height="4.4" fill="#2b2b2b" />
<rect x="3040.2" y="1870.20" width="2.3" height="4.4" fill="#2b2b2b" />
<rect x="3040.2" y="1877.00" width="2.3" height="4.4" fill="#2b2b2b" />
<rect x="3047.0" y="1863.80" width="2.3" height="4.4" fill="#2b2b2b" />
<rect x="3047.0" y="1870.20" width="2.3" height="4.4" fill="#2b2b2b" />
<rect x="3047.0" y="1877.00" width="2.3" height="4.4" fill="#2b2b2b" />
<text x="3073.38" y="1882.70" font-size="27.47" font-weight="normal" fill="#242424" textLength="242.02" lengthAdjust="spacingAndGlyphs" >FA Posting Date M...</text>
<circle cx="3360.6" cy="1872.2" r="12.4" fill="none" stroke="#1f1f1f" stroke-width="2"/>
<path d="M3354.2,1865.8 L3367.0,1878.6000000000001 M3367.0,1865.8 L3354.2,1878.6000000000001" stroke="#1f1f1f" stroke-width="2"/>
<rect x="3418" y="334.5" width="45.4" height="1655.5" fill="#ffffff" />
<rect x="3418" y="371" width="45.4" height="2" fill="#d0d4d9" />
<rect x="3418" y="556.3" width="45.4" height="2.6" fill="#d0d4d9" />
<rect x="3418" y="371" width="4" height="187" fill="#0a97a0" />
<rect x="3419.5" y="811.8" width="44" height="1.8" fill="#d0d4d9" />
<path d="M3432.9,400.3 V417.6 M3439.6,400.3 V417.6 M3446.4,400.3 V417.6 M3453.2,400.3 V417.6" fill="none" stroke="#333" stroke-width="2.5" stroke-linecap="square"/>
<path d="M3432.6,586.5 H3453.3 V588 L3446.2,595.5 V600.5 L3441,604 V595.5 L3432.6,588 Z" fill="none" stroke="#1a1a1a" stroke-width="2" stroke-linejoin="round"/>
<text transform="translate(3432.00,433.97) rotate(90)" x="0" y="0" font-size="28.20" font-weight="normal" fill="#242424" textLength="104.99" lengthAdjust="spacingAndGlyphs">Columns</text>
<text transform="translate(3432.00,621.20) rotate(90)" x="0" y="0" font-size="28.20" font-weight="normal" fill="#242424" textLength="173.07" lengthAdjust="spacingAndGlyphs">Analysis Filters</text>
<path d="M232,1991 H3463.4 V2064.5 A4,4 0 0 1 3459.4,2068.5 H236 A4,4 0 0 1 232,2064.5 Z" fill="#d8eef1"/>
<rect x="232" y="1990" width="3231.4" height="2" fill="#c6c9cf" />
<text x="276.92" y="2040.80" font-size="27.62" font-weight="normal" fill="#4f5d70" textLength="72.31" lengthAdjust="spacingAndGlyphs"  stroke="#4f5d70" stroke-width="0.91">Rows:</text>
<text x="354.84" y="2040.80" font-size="27.62" font-weight="normal" fill="#1a1a1a" textLength="15.62" lengthAdjust="spacingAndGlyphs" >8</text>
<text x="1753.86" y="2040.80" font-size="27.62" font-weight="normal" fill="#4f5d70" textLength="138.95" lengthAdjust="spacingAndGlyphs"  stroke="#4f5d70" stroke-width="0.91">Total Rows:</text>
<text x="1898.14" y="2040.80" font-size="27.62" font-weight="normal" fill="#1a1a1a" textLength="15.62" lengthAdjust="spacingAndGlyphs" >8</text>
<text x="3296.97" y="2040.80" font-size="27.62" font-weight="normal" fill="#4f5d70" textLength="100.60" lengthAdjust="spacingAndGlyphs"  stroke="#4f5d70" stroke-width="0.91">Filtered:</text>
<text x="3402.92" y="2040.80" font-size="27.62" font-weight="normal" fill="#1a1a1a" textLength="15.86" lengthAdjust="spacingAndGlyphs" >8</text>
</svg>
</body></html>
